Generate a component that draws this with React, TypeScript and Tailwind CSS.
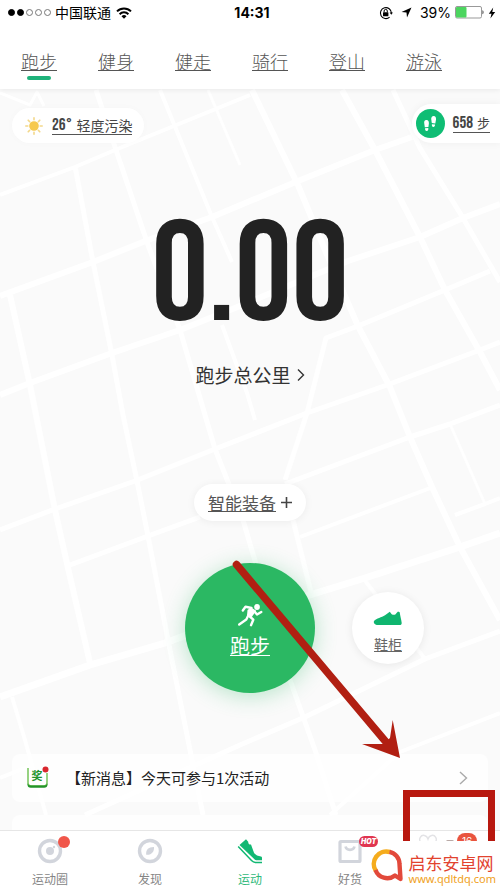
import React, { useState } from "react";

const TABS = ["跑步", "健身", "健走", "骑行", "登山", "游泳"];

const CJK = "font-['Noto_Sans_CJK_SC',sans-serif]";
const CONDENSED =
  "font-['Liberation_Sans_Narrow','Bebas_Neue','Roboto_Condensed','Open_Sans_Condensed',Roboto,'Noto_Sans_CJK_SC',sans-serif]";

const MAP_ROADS: { d: string; w: number }[] = [
  { d: "M0 93L30 105L37 92L44 106", w: 3 },
  { d: "M0 195L75 167L115 150L250 95", w: 4 },
  { d: "M0 296L93 262L148 240L212 217L298 181L375 150L412 137", w: 6 },
  { d: "M0 395L30 383L112 353L180 330L235 308L348 261L420 237L463 218L500 204", w: 6 },
  { d: "M285 480L307 413L326 338L358 326L445 290L490 271", w: 5 },
  { d: "M0 530L55 509L135 481L215 449L307 413L387 385L480 350L500 342", w: 5 },
  { d: "M70 565L148 536L200 517", w: 5 },
  { d: "M285 484L410 437L450 424L500 405", w: 5 },
  { d: "M300 537L433 487", w: 4 },
  { d: "M0 697L90 665L165 643L200 630M300 598L365 578L460 547L500 533", w: 7 },
  { d: "M455 515L485 504L500 498", w: 4 },
  { d: "M85 815L240 745L305 717L425 659L500 631", w: 5 },
  { d: "M330 815L400 752L500 713", w: 4 },
  { d: "M0 778L30 766", w: 4 },
  { d: "M96 90L116 150L148 245L180 330L205 415L215 449L243 520L290 680L315 750L336 815", w: 5 },
  { d: "M75 166L93 262L112 355L123 415L137 481L148 536L168 640L190 750L203 815", w: 5 },
  { d: "M10 295L30 385L55 510L68 568L90 663", w: 6 },
  { d: "M160 90L212 217L232 262M222 325L247 393L255 420", w: 4 },
  { d: "M208 90L240 165", w: 3 },
  { d: "M252 90L298 185L325 250L358 326L390 387L410 437L432 487L460 547L500 620", w: 6 },
  { d: "M342 90L375 150L420 237L445 290L480 352L500 390", w: 6 },
  { d: "M393 90L420 148L463 218L500 282", w: 5 },
  { d: "M293 520L311 592", w: 5 },
  { d: "M450 424L485 504", w: 3 },
  { d: "M363 578L425 659", w: 4 },
  { d: "M12 697L25 740L46 815", w: 4 },
];

const CityMap = () => (
  <svg
    className="absolute inset-0 h-full w-full"
    viewBox="0 89 500 741"
    preserveAspectRatio="xMidYMin slice"
    fill="none"
    stroke="#ffffff"
    strokeLinejoin="round"
    aria-hidden="true"
  >
    {MAP_ROADS.map((road) => (
      <path key={road.d} d={road.d} strokeWidth={road.w} />
    ))}
  </svg>
);

const WifiIcon = () => (
  <svg width="16" height="12" viewBox="0 0 16 12" aria-hidden="true">
    <g fill="none" stroke="#000" strokeWidth="2">
      <path d="M1 4.4a10 10 0 0 1 14 0" />
      <path d="M3.6 7.2a6.2 6.2 0 0 1 8.8 0" />
    </g>
    <path d="M8 11.8L5.5 9.2a3.6 3.6 0 0 1 5 0z" />
  </svg>
);

const RotationLockIcon = () => (
  <svg width="14" height="14" viewBox="0 0 14 14" aria-hidden="true">
    <path
      d="M10.6 11.2A5.5 5.5 0 1 1 12.4 7"
      fill="none"
      stroke="#000"
      strokeWidth="1.1"
    />
    <path d="M10.6 6.6h3.3l-1.6 2.2z" />
    <rect x="4" y="6.2" width="5.4" height="4" rx=".5" />
    <path
      d="M5.1 6.3V5a1.6 1.6 0 0 1 3.2 0v1.3"
      fill="none"
      stroke="#000"
      strokeWidth="1"
    />
  </svg>
);

const SunIcon = () => (
  <svg width="18" height="18" viewBox="0 0 18 18" aria-hidden="true">
    <circle cx="9" cy="9" r="4.8" fill="#f6c94f" />
    <path
      d="M9 .8v2M9 15.2v2M.8 9h2M15.2 9h2M3.2 3.2l1.4 1.4M13.4 13.4l1.4 1.4M3.2 14.8l1.4-1.4M13.4 4.6l1.4-1.4"
      stroke="#f3d88b"
      strokeWidth="1.6"
      strokeLinecap="round"
    />
  </svg>
);

const StepsIcon = () => (
  <svg width="14" height="18" viewBox="0 0 14 18" fill="#fff" aria-hidden="true">
    <path d="M3.2 5c1.9-.3 2.8 1.4 2.7 3.4L5.4 12l-3.6.3L1.200 8C.9 6.500 1.600 5.200 3.200 5z" />
    <path d="M2 13.300l3.300-.3c.2 1.700-.2 2.900-1.500 3s-1.800-1.100-1.800-2.700z" />
    <path d="M10.500 1c1.900-.1 2.700 1.500 2.500 3.400l-.7 4-3.500-.3-.6-4C8.100 2.500 9 1.100 10.500 1z" />
    <path d="M8.900 9.200l3.200.3c-.1 1.700-.8 2.600-1.800 2.500s-1.600-1.200-1.400-2.800z" />
  </svg>
);

const RunnerIcon = () => (
  <svg width="26" height="24" viewBox="0 0 26 24" aria-hidden="true">
    <circle cx="20" cy="4" r="2.9" fill="#fff" />
    <path d="M10.500 7l3.500-2.500 5.200 3.200-4.600 6.600-4.600-1.800z" fill="#fff" />
    <g
      fill="none"
      stroke="#fff"
      strokeWidth="2.400"
      strokeLinecap="round"
      strokeLinejoin="round"
    >
      <path d="M14.500 5L8.500 3.800L5.800 7.500" />
      <path d="M17.500 8.500L20 11.500L24.300 9" />
      <path d="M11.500 12L9.300 16.500L2.200 21.500" />
      <path d="M12.800 13.500L16.300 16.700L14 22.200" />
    </g>
  </svg>
);

const ShoeIcon = () => (
  <svg width="30" height="15" viewBox="0 0 30 15" aria-hidden="true">
    <path
      d="M1 10C3.500 7.300 8.500 6.500 12 4.300L16.800.8l1.900 2.400c1.900 1.100 3.700.8 4.900-1.200L25 .6l1.700.7c.5 4 1.600 7.200 2 10.700 0 1.400-.7 2-2 2H5C2 14 .2 12.200 1 10z"
      fill="#0fb56f"
    />
  </svg>
);

const PrizeIcon = () => (
  <svg width="24" height="26" viewBox="0 0 24 26" aria-hidden="true">
    <path
      d="M2 3v14.500c0 2.300 1 3.500 3.300 3.500h12.400c2.300 0 3.300-1.200 3.300-3.500V8"
      fill="#fff"
      stroke="#6cc04e"
      strokeWidth="1.400"
    />
    <path
      d="M1.500 18c.6 2 1.700 2.600 3.800 2.600h12.400c2.100 0 3.200-.6 3.800-2.600v1.800c0 2-1.300 3-3.300 3H4.800c-2 0-3.300-1-3.300-3z"
      fill="#23942a"
    />
    <text
      x="11"
      y="15"
      textAnchor="middle"
      fontSize="11"
      fontWeight="700"
      fill="#23942a"
      fontFamily="'Noto Sans CJK SC', sans-serif"
    >
      奖
    </text>
    <circle cx="19.500" cy="4.500" r="3" fill="#d9272e" />
  </svg>
);

const CircleIcon = () => (
  <svg width="26" height="26" viewBox="0 0 26 26" aria-hidden="true">
    <circle cx="13" cy="13" r="10.500" fill="none" stroke="#d2d5dc" strokeWidth="3.400" />
    <circle cx="13" cy="13" r="4" fill="#d2d5dc" />
    <circle cx="17" cy="9" r="1.200" fill="#d2d5dc" />
  </svg>
);

const CompassIcon = () => (
  <svg width="26" height="26" viewBox="0 0 26 26" aria-hidden="true">
    <circle cx="13" cy="13" r="10.500" fill="none" stroke="#d2d5dc" strokeWidth="3.400" />
    <path
      d="M17 9c.3 4-1.500 8-7.800 7.800C8.700 12 11 9 17 9z"
      fill="#d2d5dc"
    />
  </svg>
);

const SportIcon = () => (
  <svg width="26" height="26" viewBox="0 0 26 26" aria-hidden="true">
    <path
      d="M2.500 7L9 1.200l2.200 2.500c-.1 2 1.100 3 2.800 2.800l3 8.300c1.600 2.600 4.200 3.300 7 3.800.8.200 1 .7 1 1.500v2.100h-4.800c-1.700 0-2.700-.6-3.800-2z"
      fill="#11b873"
    />
    <path
      d="M1.200 8.500l13.300 14c1.200 1.300 2.300 1.900 4 1.900H25"
      fill="none"
      stroke="#11b873"
      strokeWidth="1.500"
    />
  </svg>
);

const BagIcon = () => (
  <svg width="26" height="26" viewBox="0 0 26 26" aria-hidden="true">
    <rect x="3" y="3.500" width="20" height="20" rx="1" fill="none" stroke="#d2d5dc" strokeWidth="3.200" />
    <path d="M8.500 8.500c1 4.500 8 4.500 9 0" fill="none" stroke="#d2d5dc" strokeWidth="2.600" />
  </svg>
);

const HeartIcon = () => (
  <svg width="20" height="20" viewBox="0 0 20 20" aria-hidden="true">
    <path
      d="M10 17L2.800 9.500C0 6 3 1.500 6.500 2.500 8.500 3 9.500 4.500 10 6c.5-1.500 1.500-3 3.500-3.500 3.500-1 6.500 3.500 3.700 7z"
      fill="none"
      stroke="#e3e3e6"
      strokeWidth="1.400"
    />
  </svg>
);

const StatusBar = () => (
  <div className="grid h-[25px] grid-cols-[1fr_auto_1fr] items-center pr-1 pl-2">
    <div className="flex items-center">
      <div className="flex gap-[2px]">
        {[true, true, false, false, false].map((filled, i) => (
          <span
            key={i}
            className={`h-[7px] w-[7px] rounded-full border ${
              filled ? "border-black bg-black" : "border-[#777]"
            }`}
          />
        ))}
      </div>
      <span className="ml-1 pb-[2px] text-[14px] leading-5 text-black">
        中国联通
      </span>
      <span className="ml-[5px]">
        <WifiIcon />
      </span>
    </div>
    <time className="font-[Inter,sans-serif] text-[14px] leading-5 font-bold text-black">
      14:31
    </time>
    <div className="flex items-center justify-end">
      <RotationLockIcon />
      <svg className="ml-2" width="11" height="11" viewBox="0 0 11 11" aria-hidden="true">
        <path d="M10.500.5L6 10.500 5.500 5.500.5 5z" />
      </svg>
      <span className="ml-2 font-[Inter,sans-serif] text-[14px] leading-5 text-black">
        39%
      </span>
      <svg className="ml-1" width="29" height="13" viewBox="0 0 29 13" aria-hidden="true">
        <rect x=".5" y=".5" width="26" height="11.500" rx="1.500" fill="#fff" stroke="#999" />
        <rect x="1" y="1" width="10.500" height="10.500" rx="1" fill="#4cd55f" />
        <path d="M27.500 4.200c1.300.4 1.300 3.700 0 4.100z" fill="#333" />
      </svg>
      <svg className="ml-1" width="8" height="12" viewBox="0 0 8 12" aria-hidden="true">
        <path d="M5.200.5L.8 6.800h2.700L2.400 11.500 7.200 5H4.300z" />
      </svg>
    </div>
  </div>
);

interface TabItemProps {
  label: string;
  active?: boolean;
  icon: React.ReactNode;
  badge?: React.ReactNode;
}

const TabItem: React.FC<TabItemProps> = ({ label, active, icon, badge }) => (
  <button type="button" className="flex flex-1 flex-col items-center pt-[7px]">
    <span className="relative">
      {icon}
      {badge}
    </span>
    <span
      className={`mt-[6px] text-[12px] leading-[18px] ${
        active ? "text-[#2fb97a]" : "text-[#858585]"
      }`}
    >
      {label}
    </span>
  </button>
);

export default function App() {
  const [activeTab, setActiveTab] = useState("跑步");

  return (
    <div
      className={`relative flex min-h-screen flex-col overflow-hidden bg-[#fafafa] ${CJK}`}
    >
      <header className="relative z-10 bg-white shadow-[0_1px_5px_rgba(0,0,0,0.07)]">
        <StatusBar />
        <nav className="flex h-16 gap-[41px] pt-[23px] pl-[21px]">
          {TABS.map((tab) => (
            <button
              key={tab}
              type="button"
              onClick={() => setActiveTab(tab)}
              className="flex flex-col items-center"
            >
              <span className="text-[18px] leading-[26px] font-light text-[#555] underline decoration-1 underline-offset-1">
                {tab}
              </span>
              {tab === activeTab && (
                <span className="mt-[2px] h-1 w-6 rounded-full bg-[#1fb37b]" />
              )}
            </button>
          ))}
        </nav>
      </header>

      <main className="relative flex flex-1 flex-col">
        <CityMap />

        <div className="relative flex items-start justify-between pt-[15px] pl-3">
          <button
            type="button"
            className="mt-1 flex h-[35px] items-center gap-[9px] rounded-full bg-white pr-3 pl-[13px] shadow-[0_0_8px_rgba(0,0,0,0.02)]"
          >
            <SunIcon />
            <span className="flex items-center gap-1 border-b border-[#555] leading-[18px] text-[#444]">
              <span className={`text-[17px] ${CONDENSED}`}>26°</span>
              <span className="text-[14px]">轻度污染</span>
            </span>
          </button>
          <button
            type="button"
            className="flex h-[39px] items-center gap-2 rounded-l-full bg-white pr-[10px] pl-1 shadow-[0_0_8px_rgba(0,0,0,0.05)]"
          >
            <span className="flex h-[29px] w-[29px] items-center justify-center rounded-full bg-[#0fbd74]">
              <StepsIcon />
            </span>
            <span className="flex items-center gap-1 border-b border-[#555] leading-[18px] text-[#444]">
              <span className={`text-[17px] ${CONDENSED}`}>658</span>
              <span className="text-[13px]">步</span>
            </span>
          </button>
        </div>

        <p
          className={`relative mt-[82px] text-center text-[142px] leading-[106px] text-[#222] ${CONDENSED}`}
        >
          0.00
        </p>
        <button
          type="button"
          className="relative mt-[30px] flex items-center gap-[6px] self-center text-[19px] leading-7 text-[#333]"
        >
          跑步总公里
          <svg width="8" height="14" viewBox="0 0 8 14" fill="none" aria-hidden="true">
            <path d="M1 1.500L6.500 7 1 12.500" stroke="#333" strokeWidth="1.400" />
          </svg>
        </button>

        <button
          type="button"
          className="relative mt-[95px] flex h-[37px] items-center gap-[5px] self-center rounded-full bg-white px-[14px] shadow-[0_1px_8px_rgba(0,0,0,0.06)]"
        >
          <span className="text-[17px] leading-6 text-[#555] underline decoration-1 underline-offset-1">
            智能装备
          </span>
          <svg width="11" height="11" viewBox="0 0 11 11" aria-hidden="true">
            <path d="M5.500 0v11M0 5.500h11" stroke="#444" strokeWidth="1.600" />
          </svg>
        </button>

        <div className="relative mt-[42px] grid grid-cols-[1fr_auto_1fr] items-center">
          <button
            type="button"
            className="col-start-2 flex h-[130px] w-[130px] flex-col items-center rounded-full bg-[#2bb863] pt-10 text-white shadow-[0_3px_22px_rgba(43,184,99,0.32)]"
          >
            <RunnerIcon />
            <span className="mt-[5px] text-[20px] leading-[28px] underline decoration-1 underline-offset-1">
              跑步
            </span>
          </button>
          <button
            type="button"
            className="ml-[37px] flex h-[72px] w-[72px] flex-col items-center rounded-full bg-white pt-[19px] shadow-[0_1px_8px_rgba(0,0,0,0.08)]"
          >
            <ShoeIcon />
            <span className="mt-2 text-[14px] leading-5 text-[#666] underline decoration-1 underline-offset-1">
              鞋柜
            </span>
          </button>
        </div>

        <div className="relative mx-3 mt-[61px] flex flex-1 flex-col gap-[13px]">
          <button
            type="button"
            className="flex h-12 items-center rounded-lg bg-white/80 pr-5 pl-[14px] text-left"
          >
            <PrizeIcon />
            <span className="ml-4 flex-1 text-[15px] leading-6 text-[#222]">
              【新消息】今天可参与1次活动
            </span>
            <svg width="9" height="14" viewBox="0 0 9 14" fill="none" aria-hidden="true">
              <path d="M1 1l6.500 6L1 13" stroke="#aaa" strokeWidth="1.400" />
            </svg>
          </button>
          <div className="min-h-[15px] flex-1 rounded-t-lg bg-white/80" />
        </div>

        {/* hand-drawn arrow towards the last tab */}
        <svg
          className="pointer-events-none absolute top-[470px] left-1/2 -ml-5"
          width="175"
          height="205"
          viewBox="230 559 175 205"
          aria-hidden="true"
        >
          <path
            d="M236.500 564.500L386 742"
            fill="none"
            stroke="#b11f12"
            strokeWidth="7.500"
            strokeLinecap="round"
          />
          <path d="M400 758L362 744L383 744L390 738L392.700 720z" fill="#b11f12" />
        </svg>
      </main>

      <nav className="relative flex h-[59px] border-t border-[#e6e6e6] bg-white">
        <TabItem
          label="运动圈"
          icon={<CircleIcon />}
          badge={
            <span className="absolute -top-[2px] -right-[7px] h-3 w-3 rounded-full bg-[#f0564a]" />
          }
        />
        <TabItem label="发现" icon={<CompassIcon />} />
        <TabItem label="运动" active icon={<SportIcon />} />
        <TabItem
          label="好货"
          icon={<BagIcon />}
          badge={
            <span className="absolute -top-[2px] left-[22px] rounded-full bg-[#e0354f] px-[2px] font-[Inter,sans-serif] text-[7px] leading-[11px] font-black text-white italic">
              HOT
            </span>
          }
        />
        <div className="relative flex-1">
          <span className="absolute top-[2px] left-[18px]">
            <HeartIcon />
          </span>
          <span className="absolute top-[2px] left-[57px] rounded-full bg-[#e9543f] px-[5px] font-[Inter,sans-serif] text-[10px] leading-4 text-white">
            16
          </span>
          <span className="absolute top-[9px] left-[46px] h-[3px] w-2 rounded-full bg-[#b9a9a6]" />
        </div>
      </nav>

      <div className="absolute right-[5px] bottom-12 h-[51px] w-[92px] border-[7px] border-b-0 border-[#b8180f]" />

      <div className="absolute right-0 bottom-0 flex h-12 items-center">
        <svg width="33" height="36" viewBox="0 0 33 36" fill="none" aria-hidden="true">
          <path
            d="M19 5A12.500 12.500 0 0 0 5 24"
            stroke="#f5ac1d"
            strokeWidth="4.600"
          />
          <path
            d="M18.500 4.800A12.500 12.500 0 0 1 28.500 17L29.500 32L24 28.500A12.500 12.500 0 0 1 4.500 23"
            stroke="#e2493b"
            strokeWidth="4.400"
            strokeLinejoin="round"
          />
        </svg>
        <div className="flex h-12 flex-col bg-white pt-3 pr-1 pl-[5px]">
          <span className="text-[17px] leading-5 text-[#e2432f]">
            启东安卓网
          </span>
          <a
            href="#"
            className="font-['Noto_Sans',sans-serif] text-[11px] leading-[12px] text-[#f0a11c]"
          >
            www.qdltdq.com
          </a>
        </div>
      </div>
    </div>
  );
}
